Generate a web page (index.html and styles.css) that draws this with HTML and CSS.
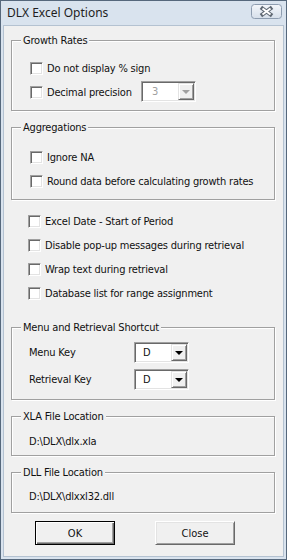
FILE: index.html
```html
<!DOCTYPE html>
<html>
<head>
<meta charset="utf-8">
<link rel="stylesheet" href="styles.css">
</head>
<body>
<div class="window">
  <div class="titlebar">
    <span class="title">DLX Excel Options</span>
    <span class="close-btn">
      <svg width="31" height="15" viewBox="0 0 31 15">
        <defs>
          <linearGradient id="cg" x1="0" y1="0" x2="0" y2="1">
            <stop offset="0" stop-color="#f4f7fb"/>
            <stop offset="1" stop-color="#d6dfea"/>
          </linearGradient>
        </defs>
        <rect x="0.5" y="0.5" width="30" height="14" rx="3" fill="url(#cg)" stroke="#8e9db0"/>
        <path d="M11.5 4.5 L19.5 10.5 M19.5 4.5 L11.5 10.5" stroke="#5f6873" stroke-width="4" stroke-linecap="square"/>
        <path d="M11.5 4.5 L19.5 10.5 M19.5 4.5 L11.5 10.5" stroke="#ffffff" stroke-width="2" stroke-linecap="butt"/>
      </svg>
    </span>
  </div>
  <div class="client">
    <div class="group g1">
      <div class="legend">Growth Rates</div>
      <div class="g-body g1-body">
        <label class="check"><span class="box"></span><span class="lbl">Do not display % sign</span></label>
        <div class="combo-row combo-row-g1">
          <label class="check check-offset"><span class="box"></span><span class="lbl">Decimal precision</span></label>
          <div class="combo disabled"><span class="val">3</span><span class="drop"><span class="tri"></span></span></div>
        </div>
      </div>
    </div>

    <div class="group g2">
      <div class="legend">Aggregations</div>
      <div class="g-body g2-body">
        <label class="check"><span class="box"></span><span class="lbl">Ignore NA</span></label>
        <label class="check"><span class="box"></span><span class="lbl">Round data before calculating growth rates</span></label>
      </div>
    </div>

    <div class="standalone">
      <label class="check"><span class="box"></span><span class="lbl">Excel Date - Start of Period</span></label>
      <label class="check"><span class="box"></span><span class="lbl">Disable pop-up messages during retrieval</span></label>
      <label class="check"><span class="box"></span><span class="lbl">Wrap text during retrieval</span></label>
      <label class="check"><span class="box"></span><span class="lbl">Database list for range assignment</span></label>
    </div>

    <div class="group g3">
      <div class="legend">Menu and Retrieval Shortcut</div>
      <div class="g-body g3-body">
        <div class="combo-row combo-row-g3">
          <span class="lbl">Menu Key</span>
          <div class="combo"><span class="val">D</span><span class="drop"><span class="tri"></span></span></div>
        </div>
        <div class="combo-row combo-row-g3">
          <span class="lbl">Retrieval Key</span>
          <div class="combo"><span class="val">D</span><span class="drop"><span class="tri"></span></span></div>
        </div>
      </div>
    </div>

    <div class="group g4">
      <div class="legend">XLA File Location</div>
      <div class="g-body g4-body"><span class="lbl">D:\DLX\dlx.xla</span></div>
    </div>

    <div class="group g5">
      <div class="legend">DLL File Location</div>
      <div class="g-body g5-body"><span class="lbl">D:\DLX\dlxxl32.dll</span></div>
    </div>

    <div class="buttons">
      <button class="btn btn-default">OK</button>
      <button class="btn">Close</button>
    </div>
  </div>
</div>
</body>
</html>
```
FILE: styles.css
```css
* { box-sizing: border-box; }
html, body { margin: 0; padding: 0; background: #fff; }
body {
  font-family: "DejaVu Sans Condensed", "DejaVu Sans", sans-serif;
  font-stretch: condensed;
  font-size: 11px;
  letter-spacing: -0.2px;
  line-height: 13px;
  color: #111;
}
.window {
  width: 287px;
  height: 560px;
  border: 1px solid #56687c;
  background: #d9e3ee;
  display: flex;
  flex-direction: column;
}
.titlebar {
  height: 24px;
  display: flex;
  align-items: flex-start;
  padding: 3px 4px 0 6px;
}
.title {
  font-family: "Noto Sans", sans-serif;
  font-stretch: normal;
  letter-spacing: 0;
  font-size: 12px;
  line-height: 16px;
  margin-top: 1px;
  color: #1e1e1e;
}
.close-btn {
  margin-left: auto;
  width: 31px;
  height: 15px;
  display: block;
}
.close-btn svg { display: block; }
.client {
  flex: 1;
  margin: 0 2px 2px;
  background: #f0f0f0;
  border: 1px solid #b4c2d1;
  display: flex;
  flex-direction: column;
  padding: 14px 8px 0 7px;
}
.group {
  display: flex;
  flex-direction: column;
  border: 1px solid #a0a0a0;
  box-shadow: inset 1px 1px 0 #fff, 1px 1px 0 #fff;
}
.legend {
  align-self: flex-start;
  margin: -7px 0 0 9px;
  padding: 0 2px;
  background: #f0f0f0;
  line-height: 13px;
}
.g-body { display: flex; flex-direction: column; }
.check {
  display: flex;
  align-items: center;
  height: 13px;
}
.box {
  width: 13px;
  height: 13px;
  flex: none;
  background: #fff;
  border: 1px solid;
  border-color: #a0a0a0 #fff #fff #a0a0a0;
  box-shadow: inset 1px 1px 0 #696969, inset -1px -1px 0 #e3e3e3;
}
.check .lbl { margin-left: 4px; white-space: nowrap; }
.lbl { white-space: nowrap; }

.g1 { margin-top: 0; }
.g1-body { padding: 15px 0 8px 18px; gap: 6px; }
.combo-row { display: grid; align-items: center; }
.combo-row-g1 { grid-template-columns: 111px 55px; align-items: start; height: 21px; }
.check-offset { margin-top: 5px; }

.g2 { margin-top: 16px; }
.g2-body { padding: 17px 0 11px 18px; gap: 11px; }

.standalone {
  display: flex;
  flex-direction: column;
  gap: 11px;
  padding: 15px 0 0 17px;
  margin-bottom: 27px;
}

.g3-body { padding: 8px 0 9px 17px; gap: 6px; }
.combo-row-g3 { grid-template-columns: 105px 55px; height: 21px; }

.g4 { margin-top: 16px; }
.g4-body { padding: 12px 0 7px 17px; }
.g5 { margin-top: 16px; }
.g5-body { padding: 11px 0 9px 17px; }

.combo {
  width: 55px;
  height: 21px;
  display: flex;
  align-items: stretch;
  padding: 1px;
  background: #fff;
  border: 1px solid;
  border-color: #a0a0a0 #fff #fff #a0a0a0;
  box-shadow: inset 1px 1px 0 #696969, inset -1px -1px 0 #e3e3e3;
}
.combo .val {
  flex: 1;
  padding-left: 7px;
  line-height: 17px;
}
.combo.disabled .val { color: #a0a0a0; padding-left: 9px; }
.drop {
  width: 16px;
  flex: none;
  background: #f0f0f0;
  border: 1px solid;
  border-color: #e3e3e3 #696969 #696969 #e3e3e3;
  box-shadow: inset 1px 1px 0 #fff, inset -1px -1px 0 #a0a0a0;
  display: flex;
  align-items: center;
  justify-content: center;
}
.tri {
  width: 0;
  height: 0;
  border-left: 4px solid transparent;
  border-right: 4px solid transparent;
  border-top: 4px solid #000;
  margin-top: 1px;
}
.combo.disabled .tri { border-top-color: #a0a0a0; }

.buttons {
  display: flex;
  gap: 40px;
  margin-top: 8px;
  padding-left: 24px;
}
.btn {
  width: 80px;
  height: 24px;
  font: inherit;
  font-family: "DejaVu Sans Condensed", "DejaVu Sans", sans-serif;
  font-stretch: condensed;
  color: #111;
  background: #f0f0f0;
  border: 1px solid;
  border-color: #fff #696969 #696969 #fff;
  box-shadow: inset 1px 1px 0 #e3e3e3, inset -1px -1px 0 #a0a0a0;
  padding: 0;
  margin: 0;
}
.btn-default {
  border: 1px solid #000;
  box-shadow: inset 1px 1px 0 #fff, inset -1px -1px 0 #696969, inset -2px -2px 0 #a0a0a0;
}
```
